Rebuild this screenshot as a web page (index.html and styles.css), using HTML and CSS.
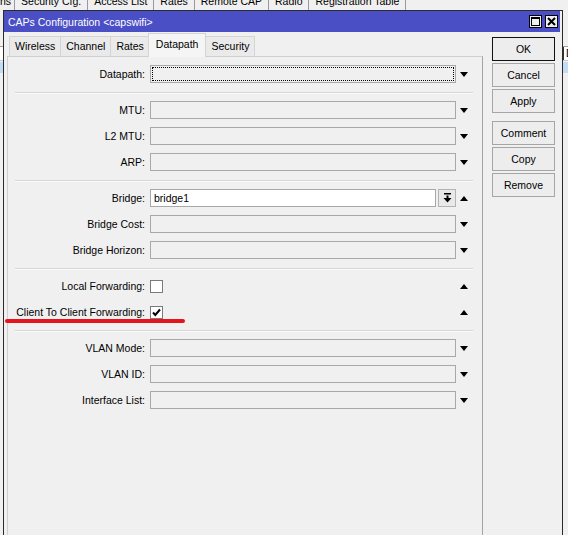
FILE: index.html
```html
<!DOCTYPE html>
<html>
<head>
<meta charset="utf-8">
<title>CAPs Configuration</title>
<link rel="stylesheet" href="styles.css">
</head>
<body>
<div class="app">
  <div class="apptabs">
    <span class="apptab first">ns</span>
    <span class="apptab">Security Cfg.</span>
    <span class="apptab">Access List</span>
    <span class="apptab">Rates</span>
    <span class="apptab">Remote CAP</span>
    <span class="apptab">Radio</span>
    <span class="apptab">Registration Table</span>
  </div>
  <div class="grid">
    <div class="ghead"><span class="gspacer"></span><span class="gcell">D</span></div>
    <div class="grow sel"></div>
  </div>
</div>

<div class="dialog">
  <div class="titlebar">
    <span class="title">CAPs Configuration &lt;capswifi&gt;</span>
    <span class="tbtns">
      <span class="tbtn"><svg width="9" height="9" viewBox="0 0 9 9"><rect x="0.5" y="0.5" width="8" height="8" fill="none" stroke="#000"/><rect x="0" y="0" width="9" height="2" fill="#000"/></svg></span>
      <span class="tbtn"><svg width="9" height="9" viewBox="0 0 9 9"><path d="M1 1 L8 8 M8 1 L1 8" stroke="#000" stroke-width="2"/></svg></span>
    </span>
  </div>
  <div class="dbody">
    <div class="main">
      <div class="tabs">
        <span class="tab">Wireless</span>
        <span class="tab">Channel</span>
        <span class="tab">Rates</span>
        <span class="tab active">Datapath</span>
        <span class="tab">Security</span>
      </div>
      <div class="panel">
        <div class="group">
          <div class="row"><span class="lbl">Datapath:</span><span class="field focus"></span><span class="arr"><i class="tri down"></i></span></div>
        </div>
        <div class="sep"></div>
        <div class="group">
          <div class="row"><span class="lbl">MTU:</span><span class="field"></span><span class="arr"><i class="tri down"></i></span></div>
          <div class="row"><span class="lbl">L2 MTU:</span><span class="field"></span><span class="arr"><i class="tri down"></i></span></div>
          <div class="row"><span class="lbl">ARP:</span><span class="field"></span><span class="arr"><i class="tri down"></i></span></div>
        </div>
        <div class="sep"></div>
        <div class="group">
          <div class="row"><span class="lbl">Bridge:</span><span class="field white short">bridge1</span><span class="ddbtn"><svg width="9" height="10" viewBox="0 0 9 10"><rect x="1" y="0" width="7" height="1.5" fill="#000"/><rect x="3.5" y="2.5" width="2" height="3" fill="#000"/><polygon points="0.5,5 8.5,5 4.5,9.5" fill="#000"/></svg></span><span class="arr"><i class="tri up"></i></span></div>
          <div class="row"><span class="lbl">Bridge Cost:</span><span class="field"></span><span class="arr"><i class="tri down"></i></span></div>
          <div class="row"><span class="lbl">Bridge Horizon:</span><span class="field"></span><span class="arr"><i class="tri down"></i></span></div>
        </div>
        <div class="sep"></div>
        <div class="group">
          <div class="row"><span class="lbl">Local Forwarding:</span><span class="cbwrap"><span class="cb"></span></span><span class="arr"><i class="tri up"></i></span></div>
          <div class="row"><span class="lbl">Client To Client Forwarding:</span><span class="cbwrap"><span class="cb"><svg width="11" height="11" viewBox="0 0 11 11"><path d="M2 5.5 L4.3 8 L9 2.5" fill="none" stroke="#000" stroke-width="2"/></svg></span></span><span class="arr"><i class="tri up"></i></span></div>
        </div>
        <div class="sep"></div>
        <div class="group">
          <div class="row"><span class="lbl">VLAN Mode:</span><span class="field"></span><span class="arr"><i class="tri down"></i></span></div>
          <div class="row"><span class="lbl">VLAN ID:</span><span class="field"></span><span class="arr"><i class="tri down"></i></span></div>
          <div class="row"><span class="lbl">Interface List:</span><span class="field"></span><span class="arr"><i class="tri down"></i></span></div>
        </div>
      </div>
    </div>
    <div class="buttons">
      <span class="btn default">OK</span>
      <span class="btn">Cancel</span>
      <span class="btn gapafter">Apply</span>
      <span class="btn">Comment</span>
      <span class="btn">Copy</span>
      <span class="btn">Remove</span>
    </div>
  </div>
</div>

<div class="mark"></div>
</body>
</html>
```

FILE: styles.css
```css
html, body {
  margin: 0;
  padding: 0;
}
body {
  width: 568px;
  height: 535px;
  overflow: hidden;
  position: relative;
  background: #f0f0f0;
  font-family: "Liberation Sans", Arial, sans-serif;
  font-size: 10.5px;
  color: #000;
}

/* background application */
.apptabs {
  display: flex;
  height: 10px;
  overflow: hidden;
  white-space: nowrap;
}
.apptab {
  display: block;
  margin-top: -5px;
  line-height: 13px;
  padding: 0 6px;
  border-right: 1px solid #9a9a9a;
  background: #f0f0f0;
}
.apptab.first {
  padding-left: 0;
  padding-right: 3px;
}
.grid {
  margin-top: 36px;
}
.ghead {
  display: flex;
  height: 13px;
  border-top: 1px solid #a0a0a0;
  border-bottom: 1px solid #c8c8c8;
  background: #fff;
}
.gspacer {
  width: 563px;
  flex: none;
}
.gcell {
  border-left: 1px solid #333;
  padding-left: 2px;
  line-height: 13px;
}
.grow {
  height: 11px;
  margin-top: 1px;
}
.grow.sel {
  background: #c3dcf5;
}

/* dialog window */
.dialog {
  position: absolute;
  left: 3px;
  top: 10px;
  width: 560px;
  height: 540px;
  box-sizing: border-box;
  border: 1px solid #2b2b2b;
  background: #f0f0f0;
  display: flex;
  flex-direction: column;
}
.titlebar {
  height: 21px;
  margin: 0 2px 0 0;
  background: #4a4fc6;
  display: flex;
  align-items: center;
  justify-content: space-between;
  flex: none;
}
.title {
  color: #fff;
  padding-left: 4px;
}
.tbtns {
  display: flex;
  gap: 3px;
  padding-right: 2px;
}
.tbtn {
  width: 13px;
  height: 13px;
  box-sizing: border-box;
  border: 1px solid #000;
  background: #f0f0f0;
  display: flex;
  align-items: center;
  justify-content: center;
}
.dbody {
  flex: 1;
  display: flex;
  padding: 1px 0 0 3px;
}
.main {
  width: 476px;
  display: flex;
  flex-direction: column;
}
.tabs {
  display: flex;
  align-items: flex-end;
  height: 23px;
  padding-left: 2px;
  position: relative;
  z-index: 1;
}
.tab {
  height: 20px;
  box-sizing: border-box;
  padding: 0 5px;
  line-height: 19px;
  background: #eaeaea;
  border: 1px solid #d4d4d4;
  border-bottom: none;
  margin-right: -1px;
}
.tab.active {
  height: 24px;
  line-height: 20px;
  background: #f5f5f5;
  margin: 0 -1px 0 -1px;
  padding: 0 7px;
  position: relative;
  z-index: 2;
  margin-bottom: -1px;
}
.panel {
  flex: 1;
  border: 1px solid #cfcfcf;
  border-right-color: #a3a3a3;
  padding-top: 8px;
  background: #f0f0f0;
}
.group {
  display: flex;
  flex-direction: column;
  gap: 8px;
}
.sep {
  height: 0;
  border-top: 1px solid #d6d6d6;
  border-bottom: 1px solid #fbfbfb;
  margin: 9px 9px 7px 7px;
}
.row {
  display: flex;
  align-items: center;
  height: 18px;
}
.lbl {
  width: 142px;
  box-sizing: border-box;
  padding-right: 5px;
  text-align: right;
  white-space: nowrap;
}
.field {
  width: 306px;
  height: 18px;
  box-sizing: border-box;
  border: 1px solid #a8a8a8;
  background: #f0f0f0;
  line-height: 16px;
  padding-left: 3px;
}
.field.focus {
  outline: 1px dotted #000;
  outline-offset: -3px;
}
.field.white {
  background: #fff;
}
.field.short {
  width: 286px;
}
.ddbtn {
  width: 18px;
  height: 18px;
  box-sizing: border-box;
  margin-left: 2px;
  border: 1px solid #b4b4b4;
  background: #e9e9e9;
  display: flex;
  align-items: center;
  justify-content: center;
}
.cbwrap {
  width: 306px;
  display: flex;
  align-items: center;
}
.cb {
  width: 13px;
  height: 13px;
  box-sizing: border-box;
  border: 1px solid #7a7a7a;
  background: #fff;
  display: flex;
  align-items: center;
  justify-content: center;
}
.arr {
  width: 16px;
  display: flex;
  justify-content: center;
}
.tri {
  width: 0;
  height: 0;
  border-left: 4px solid transparent;
  border-right: 4px solid transparent;
}
.tri.down {
  border-top: 5px solid #000;
}
.tri.up {
  border-bottom: 5px solid #000;
}

.buttons {
  margin-left: 9px;
  padding-top: 4px;
  display: flex;
  flex-direction: column;
  gap: 2px;
}
.btn {
  width: 63px;
  height: 24px;
  box-sizing: border-box;
  border: 1px solid #a6a6a6;
  background: #ededed;
  display: flex;
  align-items: center;
  justify-content: center;
}
.btn.default {
  border-color: #111;
}
.btn.gapafter {
  margin-bottom: 6px;
}

/* red annotation stroke */
.mark {
  position: absolute;
  left: 5px;
  top: 319px;
  width: 180px;
  height: 4px;
  border-radius: 2px;
  background: #e3141c;
}
```
